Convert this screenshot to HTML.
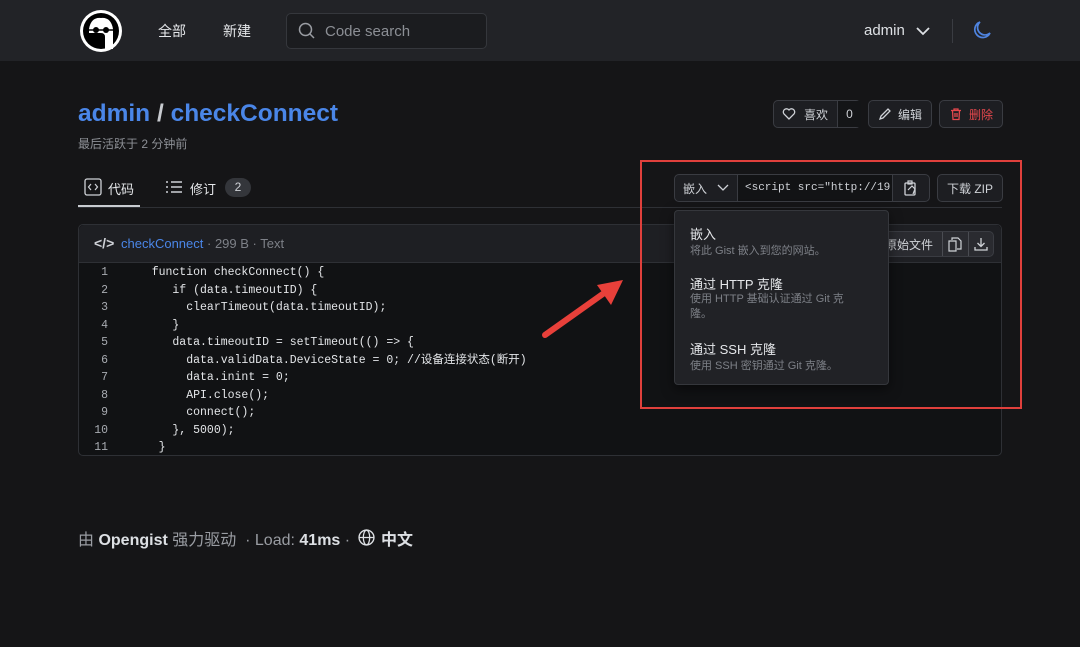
<!DOCTYPE html>
<html><head><meta charset="utf-8"><style>
*{box-sizing:border-box;margin:0;padding:0}
body{width:1080px;height:647px;background:#151517;font-family:"Liberation Sans","Noto Sans CJK SC",sans-serif;color:#d0d3d8;position:relative;overflow:hidden;font-size:13px}
.a{position:absolute}
.hdr{left:0;top:0;width:1080px;height:61px;background:#222327}
.btn{position:absolute;border:1px solid #3a3c42;border-radius:5px;background:#1d1e22;height:28px;display:flex;align-items:center;font-size:12px;color:#cfd2d7}
.mono{font-family:"Liberation Mono","Noto Sans CJK SC",monospace}
.code div{height:17.5px;line-height:17.5px;white-space:pre}
</style></head><body>
<div class="a hdr"></div>
<svg class="a" style="left:79px;top:9px" width="44" height="44" viewBox="0 0 44 44"><circle cx="22" cy="22" r="21" fill="#fff"/><circle cx="22" cy="22" r="18" fill="#000"/><path d="M10 20 Q12 8 22 9 Q32 8 34 20 L34 40 L26 40 L26 28 Q26 24 22 24 L10 24Z" fill="#fff"/><circle cx="17" cy="21" r="3" fill="#000"/><circle cx="27" cy="21" r="3" fill="#000"/><line x1="6" y1="21" x2="34" y2="21" stroke="#000" stroke-width="1.5"/></svg>
<div class="a" style="left:158px;top:21px;font-size:14px;color:#e5e7ea">全部</div>
<div class="a" style="left:223px;top:21px;font-size:14px;color:#e5e7ea">新建</div>
<div class="a" style="left:286px;top:13px;width:201px;height:36px;border:1px solid #35373c;border-radius:5px;background:#1b1c1f"></div>
<svg class="a" style="left:298px;top:22px" width="18" height="18" viewBox="0 0 18 18"><circle cx="7.5" cy="7.5" r="6" fill="none" stroke="#9a9da3" stroke-width="1.5"/><line x1="12" y1="12" x2="16" y2="16" stroke="#9a9da3" stroke-width="1.5"/></svg>
<div class="a" style="left:325px;top:23px;font-size:15px;color:#8c8f95">Code search</div>
<div class="a" style="left:864px;top:22px;font-size:15px;color:#dde0e4">admin</div>
<svg class="a" style="left:915px;top:25px" width="16" height="12"><path d="M2 3 L8 9 L14 3" fill="none" stroke="#dde0e4" stroke-width="1.8"/></svg>
<div class="a" style="left:952px;top:19px;width:1px;height:24px;background:#3a3c42"></div>
<svg class="a" style="left:972px;top:20px" width="20" height="20" viewBox="0 0 20 20"><path d="M8 2 A8 8 0 1 0 18 13 A7 7 0 0 1 8 2Z" fill="none" stroke="#4f84e0" stroke-width="1.7"/></svg>

<div class="a" style="left:78px;top:100px;font-size:24.5px;font-weight:bold;color:#4a86e8">admin <span style="color:#c8cbd0">/</span> checkConnect</div>
<div class="a" style="left:78px;top:135px;font-size:12px;color:#8d9096">最后活跃于 2 分钟前</div>

<div class="btn" style="left:773px;top:100px;width:88px;"><svg style="margin-left:8px" width="14" height="14" viewBox="0 0 14 14"><path d="M7 12 L2 7 A2.8 2.8 0 0 1 7 3 A2.8 2.8 0 0 1 12 7Z" fill="none" stroke="#cfd2d7" stroke-width="1.3"/></svg><span style="margin-left:8px">喜欢</span><span style="position:absolute;left:63px;top:0;bottom:0;width:24px;border-left:1px solid #3a3c42;background:#141517;text-align:center;line-height:26px">0</span></div>
<div class="btn" style="left:868px;top:100px;width:64px;"><svg style="margin-left:9px" width="14" height="14"><path d="M2 12 L3 9 L10 2 L12 4 L5 11Z" fill="none" stroke="#cfd2d7" stroke-width="1.3"/></svg><span style="margin-left:6px">编辑</span></div>
<div class="btn" style="left:939px;top:100px;width:64px;color:#e5484d"><svg style="margin-left:9px" width="14" height="14"><path d="M2 3.5 H12 M5 3.5 V2 H9 V3.5 M3.5 3.5 L4 12.5 H10 L10.5 3.5 M6 6 V10 M8 6 V10" fill="none" stroke="#e5484d" stroke-width="1.3"/></svg><span style="margin-left:6px">删除</span></div>

<svg class="a" style="left:84px;top:178px" width="18" height="18"><rect x="1" y="1" width="16" height="16" rx="2" fill="none" stroke="#cfd2d7" stroke-width="1.3"/><path d="M7 6 L4.5 9 L7 12 M11 6 L13.5 9 L11 12" fill="none" stroke="#cfd2d7" stroke-width="1.2"/></svg>
<div class="a" style="left:108px;top:179px;font-size:13px;color:#e5e7ea">代码</div>
<div class="a" style="left:78px;top:205px;width:62px;height:2px;background:#c8cbd0"></div>
<svg class="a" style="left:165px;top:180px" width="18" height="14"><path d="M1 2h2M1 7h2M1 12h2M6 2h11M6 7h11M6 12h11" stroke="#cfd2d7" stroke-width="1.4"/></svg>
<div class="a" style="left:190px;top:179px;font-size:13px;color:#e5e7ea">修订</div>
<div class="a" style="left:225px;top:178px;width:26px;height:19px;border-radius:10px;background:#34363b;text-align:center;font-size:12px;line-height:19px;color:#cfd2d7">2</div>
<div class="a" style="left:78px;top:207px;width:924px;height:1px;background:#2e3035"></div>

<div class="btn" style="left:674px;top:174px;width:256px;"><span style="margin-left:8px">嵌入</span><svg style="margin-left:10px" width="12" height="8"><path d="M1 1 L6 6 L11 1" fill="none" stroke="#cfd2d7" stroke-width="1.3"/></svg><span class="mono" style="position:absolute;left:62px;top:0;bottom:0;width:156px;border-left:1px solid #3a3c42;border-right:1px solid #3a3c42;background:#121315;padding-left:7px;line-height:26px;font-size:11px;overflow:hidden;white-space:nowrap">&lt;script src="http://19</span><svg style="position:absolute;left:228px;top:5px" width="16" height="17"><rect x="2" y="3" width="10" height="12" rx="1" fill="none" stroke="#cfd2d7" stroke-width="1.3"/><rect x="5" y="1" width="4" height="3" fill="none" stroke="#cfd2d7" stroke-width="1.2"/><path d="M5 10 L9 6 L12 9 L10 14" fill="none" stroke="#cfd2d7" stroke-width="1.2"/></svg></div>
<div class="btn" style="left:937px;top:174px;width:66px;justify-content:center">下载 ZIP</div>

<div class="a" style="left:78px;top:224px;width:924px;height:232px;border:1px solid #2e3035;border-radius:5px;background:#111214"></div>
<div class="a" style="left:79px;top:225px;width:922px;height:38px;background:#1e1f23;border-bottom:1px solid #2e3035;border-radius:5px 5px 0 0"></div>
<div class="a" style="left:94px;top:235px;font-size:14px;color:#cfd2d7;font-weight:bold">&lt;/&gt;</div>
<div class="a" style="left:121px;top:236px;font-size:13px;color:#4a86e8">checkConnect<span style="color:#7d8087"> · 299 B · Text</span></div>
<div class="btn" style="left:870px;top:231px;width:124px;height:26px;background:#2a2b30"><span style="margin-left:14px">原始文件</span><span style="position:absolute;left:71px;top:0;bottom:0;width:26px;border-left:1px solid #4a4c52"></span><span style="position:absolute;left:97px;top:0;bottom:0;border-left:1px solid #4a4c52"></span><svg style="position:absolute;left:76px;top:4px" width="16" height="17"><path d="M5 4 V2 H11 L14 5 V13 H10 M2 5 H9 V15 H2Z" fill="none" stroke="#cfd2d7" stroke-width="1.2"/></svg><svg style="position:absolute;left:102px;top:4px" width="16" height="16"><path d="M8 2 V10 M4.5 7 L8 10.5 L11.5 7 M2 11 V14 H14 V11" fill="none" stroke="#cfd2d7" stroke-width="1.3"/></svg></div>

<div class="a mono code" style="left:84px;top:264px;width:30px;font-size:11.5px;color:#a8abb1;text-align:right;padding-right:6px">
<div>1</div><div>2</div><div>3</div><div>4</div><div>5</div><div>6</div><div>7</div><div>8</div><div>9</div><div>10</div><div>11</div></div>
<div class="a mono code" style="left:131px;top:264px;font-size:11.5px;color:#e3e5e8">
<div>   function checkConnect() {</div><div>      if (data.timeoutID) {</div><div>        clearTimeout(data.timeoutID);</div><div>      }</div><div>      data.timeoutID = setTimeout(() =&gt; {</div><div>        data.validData.DeviceState = 0; //设备连接状态(断开)</div><div>        data.inint = 0;</div><div>        API.close();</div><div>        connect();</div><div>      }, 5000);</div><div>    }</div></div>

<div class="a" style="left:674px;top:210px;width:215px;height:175px;background:#212226;border:1px solid #35373c;border-radius:4px;box-shadow:0 4px 12px rgba(0,0,0,.5)"></div>
<div class="a" style="left:690px;top:224px;font-size:13px;color:#e5e7ea">嵌入</div>
<div class="a" style="left:690px;top:242px;font-size:11px;color:#7d8087">将此 Gist 嵌入到您的网站。</div>
<div class="a" style="left:690px;top:274px;font-size:13px;color:#e5e7ea">通过 HTTP 克隆</div>
<div class="a" style="left:690px;top:292px;width:168px;font-size:11px;line-height:15px;color:#7d8087">使用 HTTP 基础认证通过 Git 克隆。</div>
<div class="a" style="left:690px;top:339px;font-size:13px;color:#e5e7ea">通过 SSH 克隆</div>
<div class="a" style="left:690px;top:357px;font-size:11px;color:#7d8087">使用 SSH 密钥通过 Git 克隆。</div>

<div class="a" style="left:640px;top:160px;width:382px;height:249px;border:2.5px solid #e0403c"></div>
<svg class="a" style="left:535px;top:275px" width="95" height="70"><line x1="10" y1="60" x2="72" y2="16" stroke="#e8403a" stroke-width="6" stroke-linecap="round"/><polygon points="88,5 62,10 76,30" fill="#e8403a"/></svg>

<div class="a" style="left:78px;top:526px;font-size:16px;color:#9a9da3">由 <b style="color:#dde0e4">Opengist</b> 强力驱动 &nbsp;· Load: <b style="color:#dde0e4">41ms</b> · </div>
<svg class="a" style="left:358px;top:529px" width="17" height="17" viewBox="0 0 16 16"><circle cx="8" cy="8" r="7" fill="none" stroke="#dde0e4" stroke-width="1.3"/><ellipse cx="8" cy="8" rx="3" ry="7" fill="none" stroke="#dde0e4" stroke-width="1.2"/><path d="M1 8 H15" stroke="#dde0e4" stroke-width="1.2"/></svg>
<div class="a" style="left:381px;top:526px;font-size:16px;font-weight:bold;color:#dde0e4">中文</div>
</body></html>
